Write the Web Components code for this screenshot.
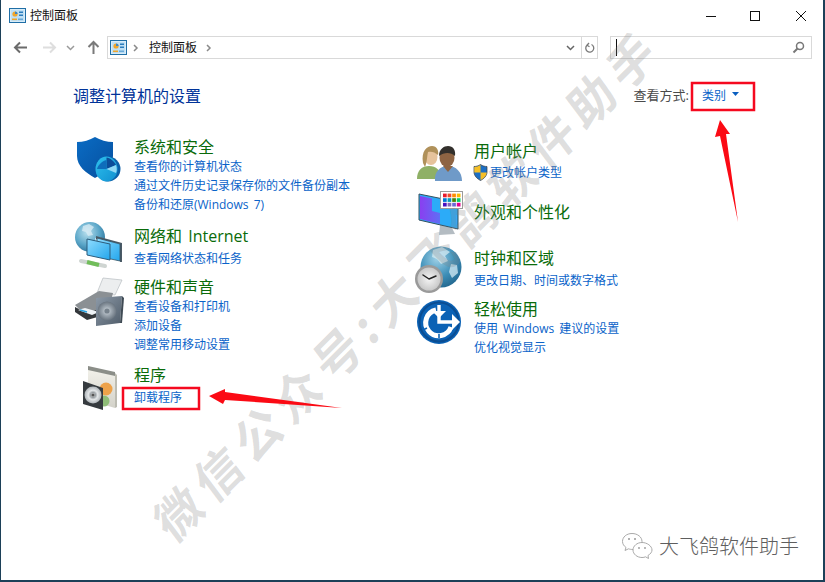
<!DOCTYPE html>
<html lang="zh-CN">
<head>
<meta charset="utf-8">
<title>控制面板</title>
<style>
  html, body { margin: 0; height: 100%; background: #fff; overflow: hidden; }
  body {
    position: relative;
    font-family: "Open Sans", "Noto Sans CJK SC", sans-serif;
    font-size: 12px;
  }
  .col-left { padding-top: 29px; }
  .col-right { padding-top: 33px; }
</style>
</head>
<body>
<cp-window>
  <cp-titlebar slot="top">控制面板</cp-titlebar>
  <cp-toolbar slot="top">控制面板</cp-toolbar>
  <cp-page-head slot="top">调整计算机的设置</cp-page-head>

  <div slot="left" class="col-left">
    <cp-category heading="系统和安全" icon="security" style="--icon-y:-3px;--title-gap:0px">
      <cp-link>查看你的计算机状态</cp-link>
      <cp-link>通过文件历史记录保存你的文件备份副本</cp-link>
      <cp-link>备份和还原(Windows 7)</cp-link>
    </cp-category>
    <cp-category heading="网络和 Internet" icon="network" style="margin-top:12px;--icon-y:-6px;--title-gap:3px">
      <cp-link>查看网络状态和任务</cp-link>
    </cp-category>
    <cp-category heading="硬件和声音" icon="hardware" style="margin-top:9px;--icon-y:1px;--title-gap:0px">
      <cp-link>查看设备和打印机</cp-link>
      <cp-link>添加设备</cp-link>
      <cp-link>调整常用移动设置</cp-link>
    </cp-category>
    <cp-category heading="程序" icon="programs" style="margin-top:11px;--icon-x:3px;--icon-y:-1px;--title-gap:3px">
      <cp-link>卸载程序</cp-link>
    </cp-category>
  </div>

  <div slot="right" class="col-right">
    <cp-category heading="用户帐户" icon="users" style="--icon-x:1px;--icon-y:2px;--title-gap:2px">
      <cp-link uac>更改帐户类型</cp-link>
    </cp-category>
    <cp-category heading="外观和个性化" icon="appearance" style="margin-top:20px;--icon-x:1px;--icon-y:-13px">
    </cp-category>
    <cp-category heading="时钟和区域" icon="clock" style="margin-top:26px;--icon-y:-3px;--title-gap:3px">
      <cp-link>更改日期、时间或数字格式</cp-link>
    </cp-category>
    <cp-category heading="轻松使用" icon="ease" style="margin-top:9px;--icon-x:1px;--icon-y:1px;--title-gap:0px">
      <cp-link>使用 Windows 建议的设置</cp-link>
      <cp-link>优化视觉显示</cp-link>
    </cp-category>
  </div>
</cp-window>
<cp-watermark>微信公众号:大飞鸽软件助手</cp-watermark>
<cp-annotations></cp-annotations>
<cp-signature>大飞鸽软件助手</cp-signature>

<script>
const PANEL_ICON = `
  <svg width="17" height="15" viewBox="0 0 17 15">
    <rect x=".5" y=".5" width="16" height="14" fill="#d8ecf8" stroke="#1f6ea6"/>
    <rect x="2" y="2" width="13" height="11" fill="#bfe0f5"/>
    <circle cx="6" cy="6" r="2.6" fill="#f0a52a"/>
    <path d="M6 6V3.4A2.6 2.6 0 0 1 8.6 6z" fill="#3b87c7"/>
    <rect x="10" y="3.5" width="4" height="1.5" fill="#2c7dbd"/>
    <rect x="10" y="6.5" width="4" height="1.5" fill="#2c7dbd"/>
    <rect x="3" y="10.5" width="5" height="1.6" fill="#f0a52a"/>
    <rect x="9" y="10.5" width="5" height="1.6" fill="#6aa9d8"/>
  </svg>`;

const ICONS = {
  security: `
    <defs>
      <linearGradient id="a" x1="0" y1="0" x2="1" y2="1"><stop offset="0" stop-color="#0a6cc4"/><stop offset="1" stop-color="#064f9e"/></linearGradient>
      <linearGradient id="b" x1="0" y1="0" x2="1" y2="1"><stop offset="0" stop-color="#2fc1ee"/><stop offset="1" stop-color="#0f8fd0"/></linearGradient>
    </defs>
    <path d="M20 3C15 6 8 8 2 8V22C2 32 11 39 20 44C28 40 38 32 38 22V8C32 8 25 6 20 3Z" fill="url(#a)"/>
    <circle cx="33" cy="35" r="12.5" fill="#0a5fa8"/>
    <ellipse cx="31.5" cy="35" rx="11" ry="12.5" fill="url(#b)"/>
    <path d="M31.5 35V23.5C35 24 39 27 41 31Z" fill="#0b4d9a"/>
    <path d="M31.5 35H22C23 31 27 27 31.5 26Z" fill="#0e6dbb"/>
    <path d="M31.5 35L41 31C42 34 42 37 41 39Z" fill="#8fd8f5"/>`,
  network: `
    <defs>
      <radialGradient id="g" cx=".4" cy=".35" r=".7"><stop offset="0" stop-color="#b9e0ee"/><stop offset=".6" stop-color="#5aa6c8"/><stop offset="1" stop-color="#2b6f96"/></radialGradient>
      <linearGradient id="s" x1="0" y1="0" x2="1" y2="1"><stop offset="0" stop-color="#8fdcff"/><stop offset="1" stop-color="#22a6ec"/></linearGradient>
    </defs>
    <circle cx="15" cy="17" r="15" fill="url(#g)"/>
    <path d="M8 6l6-2 5 3-3 4 2 4-5 1-2-4-4-1zM20 18l5-1 3 4-5 6-3-4z" fill="#dceef5" opacity=".75"/>
    <path d="M21 16L47 23V42L45 42V24L21 19Z" fill="#4b5a66"/>
    <path d="M22 18L45 24V41L22 36Z" fill="url(#s)" stroke="#35505f" stroke-width=".8"/>
    <path d="M12 19L35 24V40L12 35Z" fill="url(#s)" stroke="#2c5c7c" stroke-width="1"/>
    <path d="M6 41L30 46" stroke="#cfd5d2" stroke-width="4" stroke-linecap="round"/>
    <path d="M12 42L24 45" stroke="#71bd5a" stroke-width="4"/>`,
  hardware: `
    <defs>
      <linearGradient id="h" x1="0" y1="0" x2="1" y2="1"><stop offset="0" stop-color="#8d9aa8"/><stop offset="1" stop-color="#4f5c69"/></linearGradient>
      <radialGradient id="c"><stop offset="0" stop-color="#d9dfe4"/><stop offset=".45" stop-color="#9fa9b2"/><stop offset="1" stop-color="#69747f"/></radialGradient>
    </defs>
    <path d="M28 0L47 2L40 17L22 15Z" fill="#eceeef" stroke="#b8bdc2" stroke-width=".7"/>
    <path d="M0 27L24 13L38 15L33 34L12 39Z" fill="#8b9094"/>
    <path d="M0 29L12 35L33 28L33 36L12 42L0 34Z" fill="#34383c"/>
    <path d="M3 32L17 37L24 34L10 30Z" fill="#eef3f6"/>
    <path d="M5 32L12 34" stroke="#2aa2e0" stroke-width="1.4"/>
    <path d="M21 20L47 18L45 45L21 48Z" fill="url(#h)"/>
    <path d="M47 18L49 20L47 45L45 45Z" fill="#3f4a54"/>
    <circle cx="32" cy="33" r="9.5" fill="url(#c)"/>
    <circle cx="32" cy="33" r="2.6" fill="#77828c"/>`,
  programs: `
    <defs>
      <linearGradient id="p" x1="0" y1="0" x2="0" y2="1"><stop offset="0" stop-color="#f2f1ea"/><stop offset="1" stop-color="#d3d2c9"/></linearGradient>
      <radialGradient id="d"><stop offset="0" stop-color="#fff"/><stop offset=".3" stop-color="#9aa0a4"/><stop offset=".55" stop-color="#e4e7e9"/><stop offset="1" stop-color="#aeb4b8"/></radialGradient>
    </defs>
    <path d="M10 5L37 12V44L10 36Z" fill="url(#p)"/>
    <path d="M10 2L37 8L37 12L10 6Z" fill="#8b8e88"/>
    <path d="M37 9L39 11V43L37 44Z" fill="#bcbcb2"/>
    <circle cx="28" cy="25" r="6.5" fill="#eda24a"/>
    <circle cx="26" cy="37" r="5.5" fill="#8fbd78"/>
    <path d="M5 17L25 24V46L5 40Z" fill="#363b3f"/>
    <circle cx="15" cy="31" r="8.5" fill="url(#d)"/>
    <circle cx="15" cy="31" r="1.6" fill="#555"/>`,
  users: `
    <path d="M1 36C1 27 6 23 13 23C20 23 25 27 26 36Z" fill="#8fb066"/>
    <ellipse cx="15" cy="14" rx="6.5" ry="8" fill="#e6c39c"/>
    <path d="M7 20C5 8 11 3 16 3C21 3 23 8 22 12C19 9 15 8 12 9C11 13 11 20 9 24Z" fill="#b0915a"/>
    <path d="M19 38C18 29 24 23 32 23C40 23 46 29 46 38Z" fill="#6f9ac8"/>
    <path d="M27 23L32 29L37 23Z" fill="#8e6443"/>
    <ellipse cx="31" cy="15" rx="7.5" ry="9" fill="#8e6443"/>
    <path d="M23 13C23 6 28 3 32 3C37 3 40 7 39 13C35 9 28 9 23 13Z" fill="#33302c"/>`,
  appearance: `
    <defs>
      <linearGradient id="m" x1="0" y1="0" x2="1" y2="0"><stop offset="0" stop-color="#8a3ff0"/><stop offset="1" stop-color="#5f6ef5"/></linearGradient>
    </defs>
    <path d="M24 36L36 39L39 45L23 46Z" fill="#b4bcc2"/>
    <path d="M3 5L42 13V40L3 31Z" fill="#2cabf8" stroke="#35505f" stroke-width="1"/>
    <path d="M4 7L16 9.500V22L24 24V35L4 30Z" fill="url(#m)"/>
    <rect x="24.5" y="2.5" width="22" height="17" fill="#fff" stroke="#9b9b9b"/>
    ${[["#e8192c","#ee4b2b","#ff8c00","#fdb900"],["#0078d4","#0099bc","#498205","#00cc6a"],["#4a10c0","#8764b8","#6b69d6","#e3008c"]]
      .map((row, r) => row.map((c, i) => `<rect x="${27 + i * 4.6}" y="${4.6 + r * 4.6}" width="3.7" height="3.7" fill="${c}"/>`).join("")).join("")}`,
  clock: `
    <defs>
      <radialGradient id="k" cx=".4" cy=".3" r=".8"><stop offset="0" stop-color="#9ed0e6"/><stop offset=".55" stop-color="#3d8fb8"/><stop offset="1" stop-color="#1d5f86"/></radialGradient>
      <radialGradient id="f"><stop offset="0" stop-color="#f5f5f5"/><stop offset="1" stop-color="#c9c9c9"/></radialGradient>
    </defs>
    <circle cx="26" cy="22" r="20.5" fill="url(#k)"/>
    <path d="M18 5l9-3 8 5-5 4 3 5-7 3-4-5-5-2zM36 19l6 1 1 8-6 5-3-6z" fill="#d5ebf3" opacity=".75"/>
    <circle cx="14" cy="34" r="14" fill="#9a9a9a"/>
    <circle cx="14" cy="34" r="11.5" fill="url(#f)"/>
    <path d="M14 34L8 30M14 34L21 31" stroke="#222" stroke-width="1.5" stroke-linecap="round"/>`,
  ease: `
    <circle cx="23" cy="22" r="22" fill="#0b62b5"/>
    <circle cx="23" cy="22" r="19.5" fill="none" stroke="#0a4d92" stroke-width="2"/>
    <path d="M20 10A13 13 0 1 0 35 27" fill="none" stroke="#fff" stroke-width="5"/>
    <path d="M23 5V22H36" fill="none" stroke="#fff" stroke-width="3.4"/>
    <path d="M16 11L23 18L30 11ZM36 14L44 22L36 30Z" fill="#fff"/>
    <path d="M7 30L11 28M23 38V34" stroke="#0b62b5" stroke-width="1.6"/>`
};

class CpWindow extends HTMLElement {
  constructor() {
    super();
    this._shadowRoot = this.attachShadow({ mode: "open" });
    this._shadowRoot.innerHTML = `
      <style>
        :host { display: block; box-sizing: border-box; height: 582px; background: #fff;
          border: solid #1c4058; border-width: 0 2px 2px 1px; }
        .columns { display: flex; }
        .left { flex: 0 0 340px; padding-left: 74px; box-sizing: content-box; }
        .right { flex: 1; }
      </style>
      <slot name="top"></slot>
      <div class="columns">
        <div class="left"><slot name="left"></slot></div>
        <div class="right"><slot name="right"></slot></div>
      </div>`;
  }
}
customElements.define("cp-window", CpWindow);

class CpTitlebar extends HTMLElement {
  constructor() {
    super();
    this._shadowRoot = this.attachShadow({ mode: "open" });
    this._shadowRoot.innerHTML = `
      <style>
        :host { display: flex; align-items: center; height: 32px; padding-left: 8px; color: #111; font-size: 12px; }
        .icon { display: flex; margin-right: 4px; margin-top: -1px; }
        .text { flex: 1; line-height: 32px; }
        .buttons { display: flex; align-items: center; }
        .buttons svg { display: block; }
        .buttons span { width: 45px; height: 30px; display: flex; align-items: center; justify-content: center; }
      </style>
      <span class="icon">${PANEL_ICON}</span>
      <span class="text"><slot></slot></span>
      <div class="buttons">
        <span><svg width="12" height="12"><path d="M1 6.5H11" stroke="#111"/></svg></span>
        <span style="margin-left:-1px"><svg width="12" height="12"><rect x="1.5" y="1.5" width="9" height="9" fill="none" stroke="#111"/></svg></span>
        <span style="margin-left:1px"><svg width="12" height="12"><path d="M1 1L11 11M11 1L1 11" stroke="#111"/></svg></span>
      </div>`;
  }
}
customElements.define("cp-titlebar", CpTitlebar);

class CpToolbar extends HTMLElement {
  constructor() {
    super();
    this._shadowRoot = this.attachShadow({ mode: "open" });
    this._shadowRoot.innerHTML = `
      <style>
        :host { display: flex; align-items: center; height: 23px; margin: 4px 0 3px; padding-left: 12px; color: #111; }
        svg { display: block; }
        .nav { display: flex; align-items: center; gap: 14px; width: 94px; }
        .address { display: flex; align-items: center; box-sizing: border-box; width: 491px; height: 23px;
          border: 1px solid #d9d9d9; padding-left: 2px; }
        .crumb { margin: 0 9px 0 10px; line-height: 21px; }
        .grow { flex: 1; }
        .drop { width: 21px; display: flex; justify-content: center; }
        .refresh { width: 15px; height: 21px; border-left: 1px solid #d9d9d9; display: flex; align-items: center; justify-content: center; }
        .search { display: flex; align-items: center; justify-content: space-between; box-sizing: border-box;
          width: 202px; height: 23px; margin-left: 12px; border: 1px solid #d9d9d9; padding: 0 6px 0 5px; }
        .caret { width: 1px; height: 17px; background: #111; }
      </style>
      <div class="nav">
        <svg width="15" height="13" viewBox="0 0 15 13"><path d="M14 6.5H2M7 1.5L2 6.5L7 11.5" fill="none" stroke="#6b6b6b" stroke-width="2"/></svg>
        <svg width="15" height="13" viewBox="0 0 15 13"><path d="M1 6.5H13M8 1.5L13 6.5L8 11.5" fill="none" stroke="#dedede" stroke-width="2"/></svg>
        <svg width="9" height="6" viewBox="0 0 9 6" style="margin-left:-5px"><path d="M1 1L4.500 4.500L8 1" fill="none" stroke="#9a9a9a" stroke-width="1.500"/></svg>
        <svg width="13" height="15" viewBox="0 0 13 15" style="margin-left:-2px"><path d="M6.500 14V2M1.500 7L6.500 2L11.500 7" fill="none" stroke="#7a7a7a" stroke-width="2"/></svg>
      </div>
      <div class="address">
        ${PANEL_ICON}
        <svg width="6" height="8" viewBox="0 0 6 8" style="margin-left:6px"><path d="M1 1L4 4L1 7" fill="none" stroke="#8a8a8a" stroke-width="1.500"/></svg>
        <span class="crumb"><slot></slot></span>
        <svg width="6" height="8" viewBox="0 0 6 8"><path d="M1 1L4 4L1 7" fill="none" stroke="#8a8a8a" stroke-width="1.500"/></svg>
        <span class="grow"></span>
        <span class="drop"><svg width="9" height="6" viewBox="0 0 9 6"><path d="M1 1L4.500 4.500L8 1" fill="none" stroke="#666" stroke-width="1.500"/></svg></span>
        <span class="refresh"><svg width="11" height="12" viewBox="0 0 11 12"><path d="M7.500 2.500A4 4 0 1 1 3 3.200M5 1L3 3.200L5.500 4.800" fill="none" stroke="#7a7a7a" stroke-width="1.300"/></svg></span>
      </div>
      <div class="search">
        <span class="caret"></span>
        <svg width="13" height="13" viewBox="0 0 13 13"><circle cx="8" cy="5" r="3.500" fill="none" stroke="#777" stroke-width="1.500"/><path d="M5.500 7.500L1.500 11.500" stroke="#777" stroke-width="2"/></svg>
      </div>`;
  }
}
customElements.define("cp-toolbar", CpToolbar);

class CpPageHead extends HTMLElement {
  constructor() {
    super();
    this._shadowRoot = this.attachShadow({ mode: "open" });
    this._shadowRoot.innerHTML = `
      <style>
        :host { display: flex; align-items: center; box-sizing: border-box; height: 29px; margin-top: 20px; padding: 2px 68px 0 72px; }
        .heading { flex: 1; font-size: 16px; color: #003399; }
        .label { font-size: 13px; color: #4a4a4a; margin-right: 2px; }
        .select { display: flex; align-items: center; width: 64px; box-sizing: border-box; padding-left: 11px; color: #0a63c9; }
        .select svg { margin-left: 6px; margin-top: -2px; }
      </style>
      <span class="heading"><slot></slot></span>
      <span class="label">查看方式:</span>
      <span class="select">类别<svg width="7" height="4" viewBox="0 0 7 4"><path d="M0 0H7L3.500 4Z" fill="#0a5fc0"/></svg></span>`;
  }
}
customElements.define("cp-page-head", CpPageHead);

class CpCategory extends HTMLElement {
  constructor() {
    super();
    this._shadowRoot = this.attachShadow({ mode: "open" });
  }
  connectedCallback() {
    const icon = ICONS[this.getAttribute("icon")];
    this._shadowRoot.innerHTML = `
      <style>
        :host { display: flex; align-items: flex-start; }
        .icon { flex: 0 0 59px; height: 0; }
        .icon svg { display: block; margin: var(--icon-y, 0) 0 0 var(--icon-x, 0); overflow: visible; }
        .title { font-size: 16px; line-height: 20px; word-spacing: 2px; color: #0a6b0a; margin-bottom: var(--title-gap, 0); }
      </style>
      <div class="icon"><svg width="48" height="48" viewBox="0 0 48 48">${icon}</svg></div>
      <div>
        <div class="title">${this.getAttribute("heading")}</div>
        <slot></slot>
      </div>`;
  }
}
customElements.define("cp-category", CpCategory);

class CpLink extends HTMLElement {
  constructor() {
    super();
    this._shadowRoot = this.attachShadow({ mode: "open" });
  }
  connectedCallback() {
    const uac = this.hasAttribute("uac")
      ? `<svg width="15" height="17" viewBox="0 0 15 17" style="margin:0 2px 0 -1px;flex:none">
           <path d="M7.500 0.500C5.500 2 3 2.500 1 2.500V8C1 12 4.500 15 7.500 16.500C10.500 15 14 12 14 8V2.500C12 2.500 9.500 2 7.500 0.500Z" fill="#1c6fc4" stroke="#3b3b3b" stroke-width=".7"/>
           <path d="M7.500 1V8.500H1.300C1.300 6 1.200 4 1.300 3C3.500 3 5.500 2.300 7.500 1ZM7.500 8.500H13.700C13.500 12 10.500 14.500 7.500 16Z" fill="#f6bf26"/>
         </svg>`
      : "";
    this._shadowRoot.innerHTML = `
      <style>
        :host { display: flex; align-items: center; height: 19px; line-height: 19px; font-size: 12px; word-spacing: 2px; color: #0a63c9; white-space: pre; }
      </style>
      ${uac}<span><slot></slot></span>`;
  }
}
customElements.define("cp-link", CpLink);

// the diagonal stamp across the whole window
class CpWatermark extends HTMLElement {
  constructor() {
    super();
    this._shadowRoot = this.attachShadow({ mode: "open" });
    this._shadowRoot.innerHTML = `
      <style>
        :host { position: absolute; left: 406px; top: 282px; width: 0; height: 0; pointer-events: none; }
        div { position: absolute; left: -400px; top: -30px; width: 800px; height: 60px; line-height: 60px; text-align: center;
          transform: rotate(-45deg) skewX(-8deg); white-space: nowrap;
          font-family: "Noto Sans CJK SC", sans-serif; font-weight: 700; font-size: 48px; letter-spacing: 8px;
          color: rgba(130, 130, 130, .27); }
      </style>
      <div><slot></slot></div>`;
  }
}
customElements.define("cp-watermark", CpWatermark);

// red boxes and arrows drawn on top of the screenshot
class CpAnnotations extends HTMLElement {
  constructor() {
    super();
    this._shadowRoot = this.attachShadow({ mode: "open" });
    this._shadowRoot.innerHTML = `
      <style>
        :host { position: absolute; left: 0; top: 0; width: 825px; height: 582px; pointer-events: none; }
        svg { display: block; }
      </style>
      <svg width="825" height="582" viewBox="0 0 825 582">
        <rect x="692" y="83" width="62" height="27" fill="none" stroke="#f5091f" stroke-width="2.500"/>
        <rect x="123" y="388" width="76" height="21" fill="none" stroke="#f5091f" stroke-width="2.500"/>
        <polygon points="720,120 730,134 726,134 738,222 720,136 715,137" fill="#fb0a14"/>
        <polygon points="209,396 225,389 225,392 342,408 225,400 223,404" fill="#fb0a14"/>
      </svg>`;
  }
}
customElements.define("cp-annotations", CpAnnotations);

class CpSignature extends HTMLElement {
  constructor() {
    super();
    this._shadowRoot = this.attachShadow({ mode: "open" });
    this._shadowRoot.innerHTML = `
      <style>
        :host { position: absolute; left: 621px; top: 532px; display: flex; align-items: center; gap: 6px; height: 28px;
          font-size: 20px; color: #5e5e5e; font-family: "Noto Sans CJK SC", sans-serif; font-weight: 300; line-height: 28px; }
        svg { display: block; }
      </style>
      <svg width="32" height="28" viewBox="0 0 32 28" fill="#fff" stroke="#aaa" stroke-width="1">
        <path d="M11 1.500C5.500 1.500 1.500 5 1.500 9.500C1.500 12 3 14 5 15.500L4 18.500L7.500 16.800C9 17.300 10 17.500 12 17.500C16 17.500 21 14 21 9.500C21 5 16.500 1.500 11 1.500Z"/>
        <path d="M21 10.500C16 10.500 12 14 12 18C12 22 16 25.500 21 25.500C22.500 25.500 23.500 25.300 24.500 24.800L27.500 26.500L27 23.500C29.500 22 31 20 31 18C31 14 26 10.500 21 10.500Z"/>
        <circle cx="8" cy="7" r="1" fill="#999" stroke="none"/><circle cx="14" cy="7" r="1" fill="#999" stroke="none"/>
        <circle cx="18" cy="16" r=".9" fill="#999" stroke="none"/><circle cx="24" cy="16" r=".9" fill="#999" stroke="none"/>
      </svg>
      <span><slot></slot></span>`;
  }
}
customElements.define("cp-signature", CpSignature);
</script>
</body>
</html>
